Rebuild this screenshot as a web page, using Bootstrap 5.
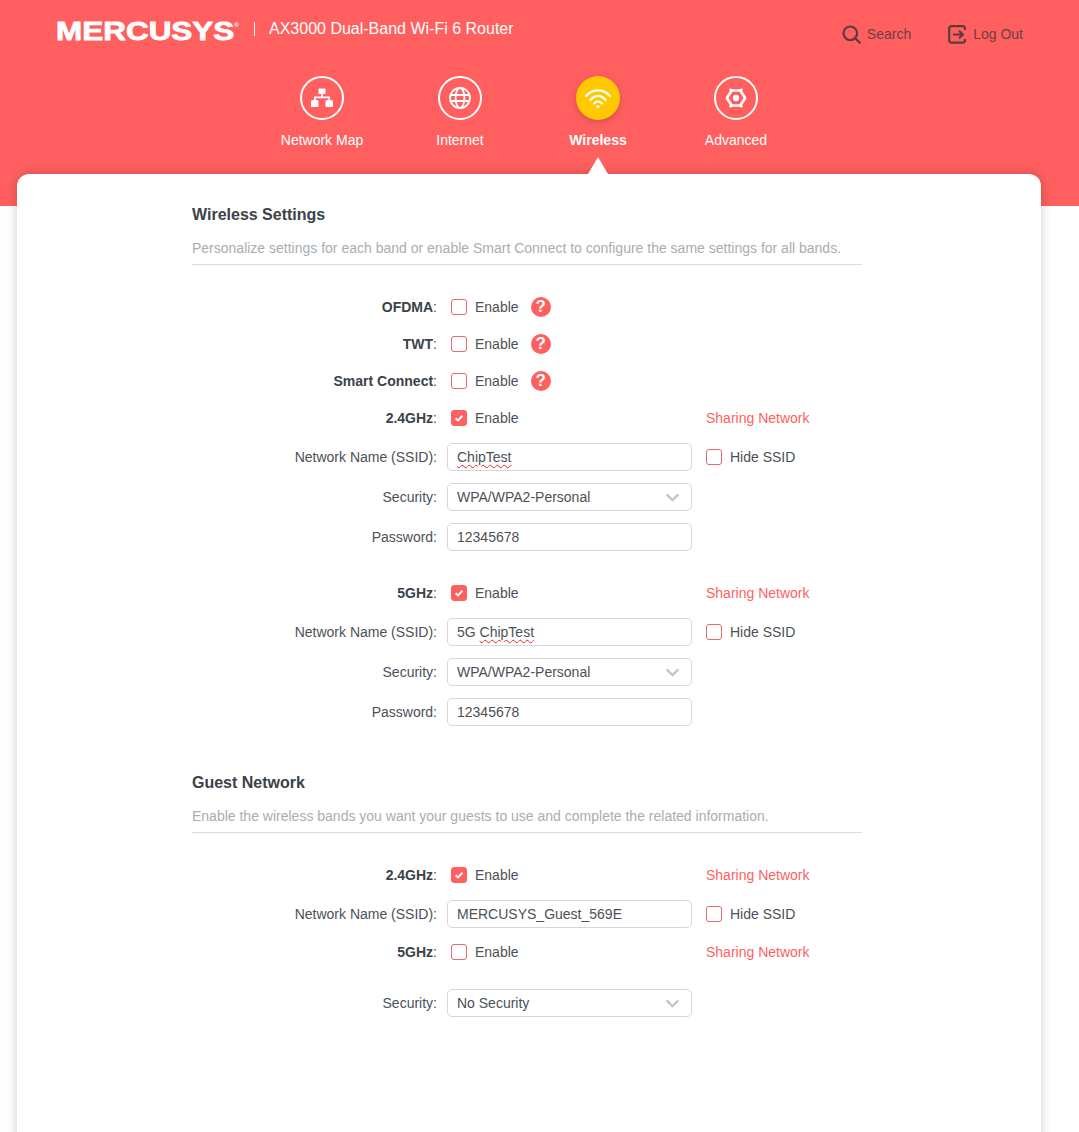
<!DOCTYPE html>
<html lang="en">

<head>
    <meta charset="UTF-8">
    <meta name="viewport" content="width=device-width, initial-scale=1">
    <title>MERCUSYS AX3000 Router - Wireless</title>

    <link href="https://cdn.jsdelivr.net/npm/bootstrap@5.3.2/dist/css/bootstrap.min.css" rel="stylesheet">

    <style>
        html, body {
            height: 100%;
            overflow: hidden;
        }

        body {
            font-family: "Liberation Sans", Arial, sans-serif;
            font-size: 14px;
            color: #4b5157;
            background: #fff;
        }

        /* header */
        .top-band {
            height: 206px;
            background: #ff5f5f;
            color: #fff;
        }

        .top-row {
            height: 76px;
            padding: 0 56px;
        }

        .brand-word {
            display: inline-block;
            width: 147px;
            margin-top: 10px;
            font-size: 26px;
            line-height: 30px;
            font-weight: 700;
            -webkit-text-stroke: .8px #fff;
            white-space: nowrap;
            transform: scaleX(1.21);
            transform-origin: left center;
        }

        .brand-reg {
            font-size: 5px;
            vertical-align: 13px;
            -webkit-text-stroke: 0;
        }

        .brand-sep {
            margin-left: 51px;
            margin-top: 22px;
            width: 1px;
            height: 14px;
            background: #fff;
        }

        .brand-model {
            margin-left: 14px;
            margin-top: 19px;
            font-size: 16px;
            line-height: 20px;
        }

        .top-tools {
            margin-top: 24px;
            color: #6b3f44;
            gap: 37px;
        }

        .tool-link {
            color: inherit;
            text-decoration: none;
            gap: 6px;
        }

        .tab-strip {
            width: 552px;
            margin-left: 253px;
        }

        .tab-item {
            width: 138px;
            color: #fff;
            text-decoration: none;
        }

        .tab-disc {
            width: 44px;
            height: 44px;
            border: 2px solid #fff;
            border-radius: 50%;
        }

        .tab-item.is-current .tab-disc {
            border: 0;
            background: #ffc800;
            box-shadow: 0 2px 6px rgba(120, 60, 40, .35);
        }

        .tab-item.is-current .tab-name {
            font-weight: 700;
        }

        .tab-name {
            margin-top: 12px;
            line-height: 17px;
        }

        /* white panel */
        .main-panel {
            position: relative;
            margin: -32px 38px 0 17px;
            min-height: 1100px;
            padding: 32px 0 0 175px;
            background: #fff;
            border-radius: 12px 12px 0 0;
            box-shadow: 0 0 12px rgba(0, 0, 0, .2);
        }

        .panel-notch {
            position: absolute;
            left: 571px;
            top: -17px;
            width: 20px;
            height: 17px;
            background: #fff;
            clip-path: polygon(50% 0, 100% 100%, 0 100%);
        }

        .form-area {
            width: 670px;
        }

        .sect-title {
            margin: 0;
            font-size: 16px;
            line-height: 18px;
            font-weight: 700;
            color: #3b4249;
        }

        .sect-note {
            margin-top: 15px;
            padding-bottom: 7px;
            line-height: 18px;
            color: #a9adb1;
            border-bottom: 1px solid #d9dbdd;
        }

        .sect-gap {
            margin-top: 42px;
        }

        .check-row, .field-row {
            display: flex;
            align-items: center;
        }

        .check-row {
            height: 37px;
        }

        .field-row {
            height: 40px;
        }

        .field-label {
            flex: 0 0 245px;
            text-align: right;
        }

        .field-label strong {
            color: #3b4249;
        }

        .field-body {
            flex: 0 0 245px;
            margin-left: 10px;
        }

        .check-row .field-body {
            padding-left: 4px;
            gap: 8px;
        }

        .field-side {
            margin-left: 14px;
            white-space: nowrap;
        }

        .share-link {
            color: #ff5f5f;
            text-decoration: none;
        }

        .form-check-input.router-check {
            width: 16px;
            height: 16px;
            margin: 0 0 1px;
            border: 1px solid #e2686b;
            border-radius: 3px;
            background-size: 12px;
        }

        .form-check-input.router-check:checked {
            background-color: #ff5f5f;
            border-color: #ff5f5f;
            background-image: url("data:image/svg+xml,%3csvg xmlns='http://www.w3.org/2000/svg' viewBox='0 0 12 12'%3e%3cpath fill='none' stroke='%23fff' stroke-width='2' d='M2.6 6.2 5 8.4l4.4-4.6'/%3e%3c/svg%3e");
        }

        .help-dot {
            width: 20px;
            height: 20px;
            margin: 0 0 1px 4px;
            border-radius: 50%;
            background: #ff5f5f;
            color: #fff;
            font-size: 17px;
            font-weight: 700;
            line-height: 20px;
            text-align: center;
        }

        .form-control.router-input, .form-select.router-input {
            height: 28px;
            min-height: 0;
            padding: 0 9px;
            border: 1px solid #d4d6d8;
            border-radius: 5px;
            font-size: 14px;
            line-height: 26px;
            color: #4b5157;
        }

        .form-select.router-input {
            padding-right: 30px;
            background-image: url("data:image/svg+xml,%3csvg xmlns='http://www.w3.org/2000/svg' viewBox='0 0 16 10'%3e%3cpath fill='none' stroke='%23c3c5c7' stroke-width='2.6' d='M1.5 1.5 8 8l6.500-6.500'/%3e%3c/svg%3e");
            background-position: right 11px center;
            background-size: 15px 9px;
        }

        .spell-flag {
            text-decoration: underline wavy #e0262a 1px;
            text-underline-offset: 2px;
        }

        .block-gap {
            margin-top: 18px;
        }

        .guest-gap {
            margin-top: 12px;
        }
    </style>
</head>

<body>

    <header class="top-band">
        <div class="top-row d-flex justify-content-between align-items-start">
            <div class="d-flex align-items-start">
                <span class="brand-word">MERCUSYS<span class="brand-reg">®</span></span>
                <span class="brand-sep"></span>
                <span class="brand-model">AX3000 Dual-Band Wi-Fi 6 Router</span>
            </div>
            <div class="top-tools d-flex align-items-center">
                <a href="#" class="tool-link d-flex align-items-center">
                    <svg width="19" height="19" viewBox="0 0 19 19" fill="none" stroke="#5e3b3f" stroke-width="2.2">
                        <circle cx="8.300" cy="8.300" r="6.800" />
                        <path d="M13.200 13.200l4.600 4.600" stroke-linecap="round" />
                    </svg>
                    Search
                </a>
                <a href="#" class="tool-link d-flex align-items-center">
                    <svg width="19" height="19" viewBox="0 0 19 19" fill="none" stroke="#5e3b3f" stroke-width="2.2">
                        <path d="M17 5V3.500A2.200 2.200 0 0 0 14.800 1.200H3.400A2.200 2.200 0 0 0 1.200 3.500v12a2.200 2.200 0 0 0 2.200 2.200h11.400a2.200 2.200 0 0 0 2.200-2.200V14" />
                        <path d="M5 9.500h10M11 5.800l3.900 3.700-3.900 3.700" />
                    </svg>
                    Log Out
                </a>
            </div>
        </div>

        <nav class="tab-strip d-flex">
            <a href="#" class="tab-item d-flex flex-column align-items-center">
                <span class="tab-disc d-flex align-items-center justify-content-center">
                    <svg width="24" height="24" viewBox="0 0 24 24" fill="#fff">
                        <path d="M9.500 2.500h5a1 1 0 0 1 1 1v4.500h-7V3.500a1 1 0 0 1 1-1z" />
                        <path d="M11.200 8h1.600v2.600h7.200v3.400h-1.600v-1.800H5.600V14H4v-3.400h7.200z" />
                        <path d="M2.500 14h4.500a1.500 1.500 0 0 1 1.500 1.500V21H1v-5.500A1.500 1.500 0 0 1 2.500 14z" />
                        <path d="M17 14h4.500a1.500 1.500 0 0 1 1.500 1.500V21h-7.500v-5.500A1.500 1.500 0 0 1 17 14z" />
                    </svg>
                </span>
                <span class="tab-name">Network Map</span>
            </a>
            <a href="#" class="tab-item d-flex flex-column align-items-center">
                <span class="tab-disc d-flex align-items-center justify-content-center">
                    <svg width="24" height="24" viewBox="0 0 24 24" fill="none" stroke="#fff" stroke-width="1.800">
                        <circle cx="12" cy="12" r="10" />
                        <ellipse cx="12" cy="12" rx="4.400" ry="10" />
                        <path d="M2 9h20M2 15h20" />
                    </svg>
                </span>
                <span class="tab-name">Internet</span>
            </a>
            <a href="#" class="tab-item is-current d-flex flex-column align-items-center">
                <span class="tab-disc d-flex align-items-center justify-content-center">
                    <svg width="28" height="24" viewBox="0 0 28 24" fill="none" stroke="#fff" stroke-width="2.200" stroke-linecap="round">
                        <path d="M2 10C9 2.500 19 2.500 26 10" />
                        <path d="M6.500 14C11 8.500 17 8.500 21.500 14" />
                        <path d="M10 17.500C12.500 14.800 15.500 14.800 18 17.500" />
                        <path d="M12.500 20h3L14 21.800z" fill="#fff" stroke-width="1" stroke-linejoin="round" />
                    </svg>
                </span>
                <span class="tab-name">Wireless</span>
            </a>
            <a href="#" class="tab-item d-flex flex-column align-items-center">
                <span class="tab-disc d-flex align-items-center justify-content-center">
                    <svg width="26" height="26" viewBox="0 0 26 26" fill="none" stroke="#fff">
                        <path d="M8.500 5.500h9l4.500 7.500-4.500 7.500h-9L4 13z" stroke-width="2.600" stroke-linejoin="round" />
                        <path d="M7.500 4.700l.6.600M18.500 4.700l-.6.600M7.500 21.300l.6-.6M18.500 21.300l-.6-.6" stroke-width="2.400" stroke-linecap="round" />
                        <circle cx="13" cy="13" r="3.200" fill="#fff" stroke="none" />
                    </svg>
                </span>
                <span class="tab-name">Advanced</span>
            </a>
        </nav>
    </header>

    <main class="main-panel">
        <span class="panel-notch"></span>
        <div class="form-area">
            <h2 class="sect-title">Wireless Settings</h2>
            <p class="sect-note mb-0">Personalize settings for each band or enable Smart Connect to configure the same settings for all bands.</p>

            <div class="mt-4">
                <div class="check-row">
                    <div class="field-label"><strong>OFDMA</strong>:</div>
                    <div class="field-body d-flex align-items-center">
                        <input class="form-check-input router-check" type="checkbox" id="ofdma">
                        <label for="ofdma">Enable</label>
                        <span class="help-dot">?</span>
                    </div>
                </div>
                <div class="check-row">
                    <div class="field-label"><strong>TWT</strong>:</div>
                    <div class="field-body d-flex align-items-center">
                        <input class="form-check-input router-check" type="checkbox" id="twt">
                        <label for="twt">Enable</label>
                        <span class="help-dot">?</span>
                    </div>
                </div>
                <div class="check-row">
                    <div class="field-label"><strong>Smart Connect</strong>:</div>
                    <div class="field-body d-flex align-items-center">
                        <input class="form-check-input router-check" type="checkbox" id="smart">
                        <label for="smart">Enable</label>
                        <span class="help-dot">?</span>
                    </div>
                </div>
                <div class="check-row">
                    <div class="field-label"><strong>2.4GHz</strong>:</div>
                    <div class="field-body d-flex align-items-center">
                        <input class="form-check-input router-check" type="checkbox" id="band24" checked>
                        <label for="band24">Enable</label>
                    </div>
                    <div class="field-side"><a href="#" class="share-link">Sharing Network</a></div>
                </div>
                <div class="field-row">
                    <div class="field-label">Network Name (SSID):</div>
                    <div class="field-body">
                        <div class="form-control router-input"><span class="spell-flag">ChipTest</span></div>
                    </div>
                    <div class="field-side d-flex align-items-center gap-2">
                        <input class="form-check-input router-check" type="checkbox" id="hide24">
                        <label for="hide24">Hide SSID</label>
                    </div>
                </div>
                <div class="field-row">
                    <div class="field-label">Security:</div>
                    <div class="field-body">
                        <select class="form-select router-input">
                            <option>WPA/WPA2-Personal</option>
                        </select>
                    </div>
                </div>
                <div class="field-row">
                    <div class="field-label">Password:</div>
                    <div class="field-body">
                        <input class="form-control router-input" type="text" value="12345678">
                    </div>
                </div>

                <div class="check-row block-gap">
                    <div class="field-label"><strong>5GHz</strong>:</div>
                    <div class="field-body d-flex align-items-center">
                        <input class="form-check-input router-check" type="checkbox" id="band5" checked>
                        <label for="band5">Enable</label>
                    </div>
                    <div class="field-side"><a href="#" class="share-link">Sharing Network</a></div>
                </div>
                <div class="field-row">
                    <div class="field-label">Network Name (SSID):</div>
                    <div class="field-body">
                        <div class="form-control router-input">5G <span class="spell-flag">ChipTest</span></div>
                    </div>
                    <div class="field-side d-flex align-items-center gap-2">
                        <input class="form-check-input router-check" type="checkbox" id="hide5">
                        <label for="hide5">Hide SSID</label>
                    </div>
                </div>
                <div class="field-row">
                    <div class="field-label">Security:</div>
                    <div class="field-body">
                        <select class="form-select router-input">
                            <option>WPA/WPA2-Personal</option>
                        </select>
                    </div>
                </div>
                <div class="field-row">
                    <div class="field-label">Password:</div>
                    <div class="field-body">
                        <input class="form-control router-input" type="text" value="12345678">
                    </div>
                </div>
            </div>

            <div class="sect-gap">
                <h2 class="sect-title">Guest Network</h2>
                <p class="sect-note mb-0">Enable the wireless bands you want your guests to use and complete the related information.</p>
            </div>

            <div class="mt-4">
                <div class="check-row">
                    <div class="field-label"><strong>2.4GHz</strong>:</div>
                    <div class="field-body d-flex align-items-center">
                        <input class="form-check-input router-check" type="checkbox" id="guest24" checked>
                        <label for="guest24">Enable</label>
                    </div>
                    <div class="field-side"><a href="#" class="share-link">Sharing Network</a></div>
                </div>
                <div class="field-row">
                    <div class="field-label">Network Name (SSID):</div>
                    <div class="field-body">
                        <input class="form-control router-input" type="text" value="MERCUSYS_Guest_569E">
                    </div>
                    <div class="field-side d-flex align-items-center gap-2">
                        <input class="form-check-input router-check" type="checkbox" id="guestHide">
                        <label for="guestHide">Hide SSID</label>
                    </div>
                </div>
                <div class="check-row">
                    <div class="field-label"><strong>5GHz</strong>:</div>
                    <div class="field-body d-flex align-items-center">
                        <input class="form-check-input router-check" type="checkbox" id="guest5">
                        <label for="guest5">Enable</label>
                    </div>
                    <div class="field-side"><a href="#" class="share-link">Sharing Network</a></div>
                </div>
                <div class="field-row guest-gap">
                    <div class="field-label">Security:</div>
                    <div class="field-body">
                        <select class="form-select router-input">
                            <option>No Security</option>
                        </select>
                    </div>
                </div>
            </div>
        </div>
    </main>

    <script src="https://cdn.jsdelivr.net/npm/bootstrap@5.3.2/dist/js/bootstrap.bundle.min.js"></script>
</body>

</html>
